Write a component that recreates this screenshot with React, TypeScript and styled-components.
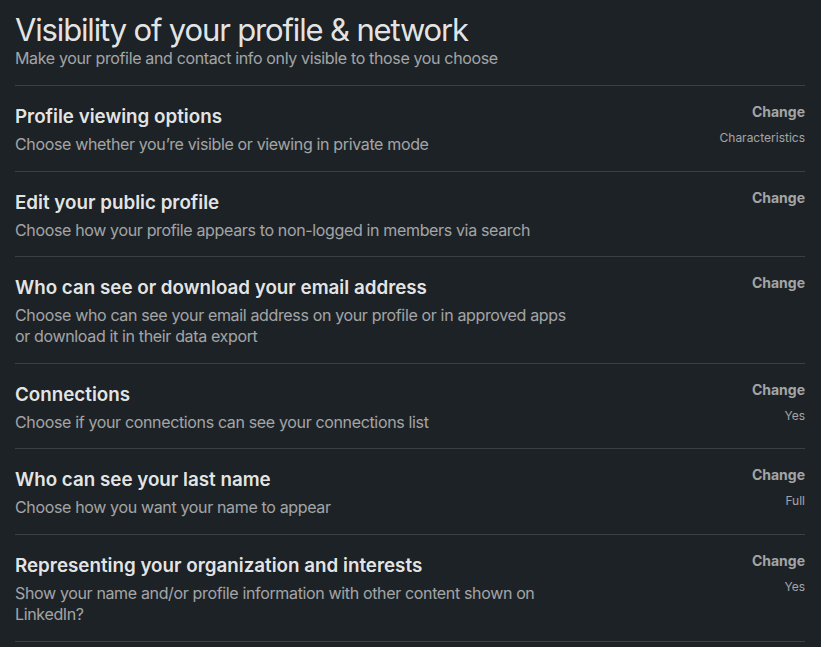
import React from "react";
import styled, { createGlobalStyle } from "styled-components";

const GlobalStyle = createGlobalStyle`
  html, body { margin: 0; padding: 0; background: #1d2226; }
  body { font-family: Inter, "Noto Sans", "Liberation Sans", sans-serif; -webkit-font-smoothing: antialiased; }
  * { box-sizing: border-box; }
`;

const Page = styled.div`
  background: #1d2226;
  min-height: 647px;
  padding: 0 16px 0 15px;
`;

const Header = styled.header`
  padding-top: 12px;
  padding-bottom: 17px;
`;

const PageTitle = styled.h1`
  margin: 0;
  font-size: 31px;
  line-height: 36px;
  font-weight: 400;
  color: rgba(255, 255, 255, 0.9);
  letter-spacing: -1.15px;
`;

const PageSubtitle = styled.p`
  margin: 0;
  font-size: 16px;
  line-height: 20px;
  letter-spacing: -0.35px;
  color: rgba(255, 255, 255, 0.6);
`;

const List = styled.ul`
  list-style: none;
  margin: 0;
  padding: 0;
`;

const Row = styled.li`
  display: flex;
  justify-content: space-between;
  align-items: flex-start;
  border-top: 1px solid #3a3f44;
  padding: 16px 0 15.6px;
  &:last-child { border-bottom: 1px solid #3a3f44; }
`;

const TextCol = styled.div`
  max-width: 564px;
`;

const RowTitle = styled.h3`
  margin: 0;
  font-size: 18.8px;
  line-height: 30px;
  font-weight: 600;
  color: rgba(255, 255, 255, 0.9);
`;

const RowDesc = styled.p`
  margin: 2px 0 0;
  font-size: 16px;
  line-height: 21px;
  letter-spacing: -0.35px;
  color: rgba(255, 255, 255, 0.6);
`;

const ActionCol = styled.div`
  display: flex;
  flex-direction: column;
  align-items: flex-end;
`;

const ChangeButton = styled.button`
  background: none;
  border: none;
  padding: 0;
  font-family: inherit;
  font-size: 14px;
  line-height: 20px;
  font-weight: 700;
  color: rgba(255, 255, 255, 0.6);
  cursor: pointer;
`;

const Value = styled.span`
  margin-top: 8px;
  font-size: 12px;
  line-height: 16px;
  color: rgba(255, 255, 255, 0.6);
`;

const rows = [
  { title: "Profile viewing options", desc: "Choose whether you’re visible or viewing in private mode", value: "Characteristics" },
  { title: "Edit your public profile", desc: "Choose how your profile appears to non-logged in members via search", value: "" },
  { title: "Who can see or download your email address", desc: "Choose who can see your email address on your profile or in approved apps or download it in their data export", value: "" },
  { title: "Connections", desc: "Choose if your connections can see your connections list", value: "Yes" },
  { title: "Who can see your last name", desc: "Choose how you want your name to appear", value: "Full" },
  { title: "Representing your organization and interests", desc: "Show your name and/or profile information with other content shown on LinkedIn?", value: "Yes" },
];

export default function App() {
  return (
    <>
      <GlobalStyle />
      <Page>
        <Header>
          <PageTitle>Visibility of your profile &amp; network</PageTitle>
          <PageSubtitle>Make your profile and contact info only visible to those you choose</PageSubtitle>
        </Header>
        <List>
          {rows.map((r) => (
            <Row key={r.title}>
              <TextCol>
                <RowTitle>{r.title}</RowTitle>
                <RowDesc>{r.desc}</RowDesc>
              </TextCol>
              <ActionCol>
                <ChangeButton>Change</ChangeButton>
                {r.value && <Value>{r.value}</Value>}
              </ActionCol>
            </Row>
          ))}
        </List>
      </Page>
    </>
  );
}
